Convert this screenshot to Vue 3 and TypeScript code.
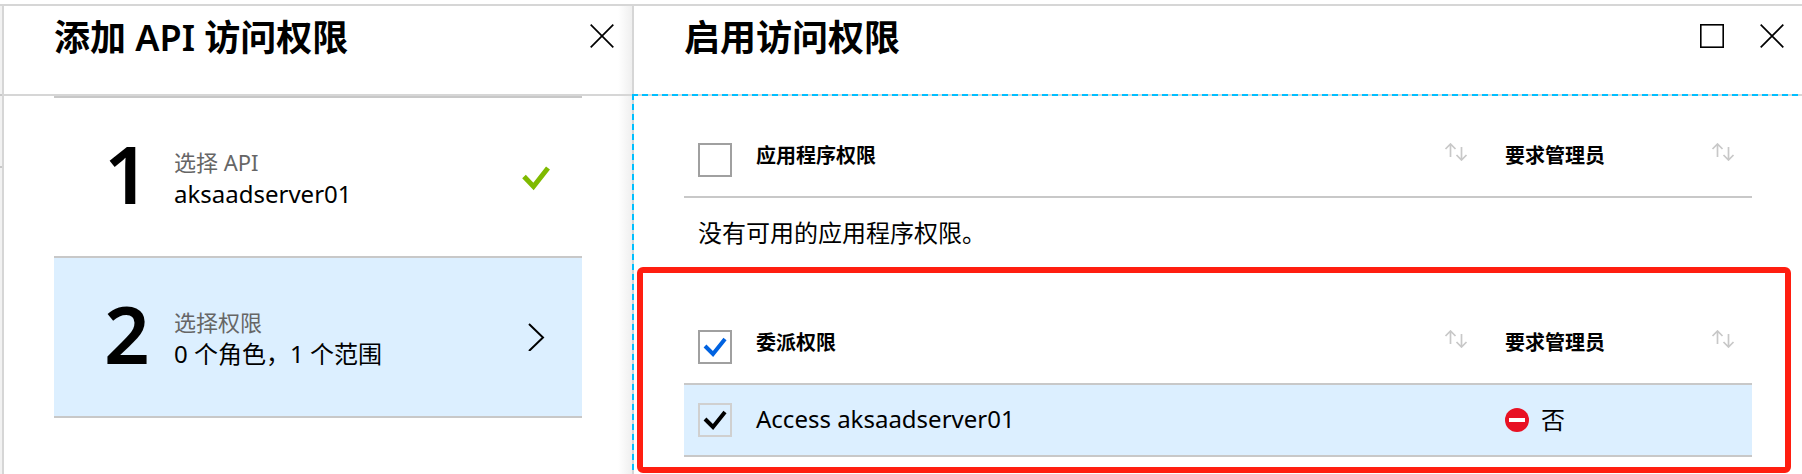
<script setup lang="ts">
import { ref } from 'vue'

interface Step {
  number: number
  title: string
  detail: string
  done: boolean
}

const steps: Step[] = [
  { number: 1, title: '选择 API', detail: 'aksaadserver01', done: true },
  { number: 2, title: '选择权限', detail: '0 个角色，1 个范围', done: false },
]

const allApplication = ref(false)
const allDelegated = ref(true)
const accessServer = ref(true)
</script>

<template>
  <div class="portal">
    <div class="gutter"></div>

    <section class="blade blade-steps" aria-labelledby="steps-title">
      <header class="blade-header">
        <h1 id="steps-title">添加 API 访问权限</h1>
        <div class="actions">
          <button type="button" class="icon-button" aria-label="关闭">
            <svg viewBox="0 0 24 24"><path d="M.7.7 23.3 23.3M23.3.7.7 23.3" /></svg>
          </button>
        </div>
      </header>
      <div class="steps">
        <button
          v-for="step in steps"
          :key="step.number"
          type="button"
          class="step"
          :class="{ active: !step.done }"
        >
          <span class="number">{{ step.number }}</span>
          <span class="labels">
            <span class="label">{{ step.title }}</span>
            <span class="detail">{{ step.detail }}</span>
          </span>
          <svg v-if="step.done" class="state" viewBox="0 0 28 28">
            <path class="done-mark" d="M2 13.5 11.500 23.500 26 5" />
          </svg>
          <svg v-else class="state" viewBox="0 0 28 28">
            <path class="chevron" d="M7 1 21 14.500 7 28" />
          </svg>
        </button>
      </div>
    </section>

    <section class="blade blade-permissions" aria-labelledby="permissions-title">
      <header class="blade-header">
        <h1 id="permissions-title">启用访问权限</h1>
        <div class="actions">
          <button type="button" class="icon-button" aria-label="最大化">
            <svg viewBox="0 0 24 24"><rect x=".75" y=".75" width="22.500" height="22.500" /></svg>
          </button>
          <button type="button" class="icon-button" aria-label="关闭">
            <svg viewBox="0 0 24 24"><path d="M.7.7 23.3 23.3M23.3.7.7 23.3" /></svg>
          </button>
        </div>
      </header>

      <div class="content">
        <div class="group">
          <table>
            <colgroup><col class="col-check" /><col /><col class="col-admin" /></colgroup>
            <thead>
              <tr>
                <th class="check"><input v-model="allApplication" type="checkbox" aria-label="应用程序权限" /></th>
                <th scope="col">
                  <div class="head">
                    应用程序权限
                    <svg class="sort" viewBox="0 0 24 18"><path d="M6.500 14V1M1.500 6l5-5 5 5M17.500 4v13M12.500 12l5 5 5-5" /></svg>
                  </div>
                </th>
                <th scope="col">
                  <div class="head">
                    要求管理员
                    <svg class="sort" viewBox="0 0 24 18"><path d="M6.500 14V1M1.500 6l5-5 5 5M17.500 4v13M12.500 12l5 5 5-5" /></svg>
                  </div>
                </th>
              </tr>
            </thead>
            <tbody>
              <tr><td colspan="3" class="empty">没有可用的应用程序权限。</td></tr>
            </tbody>
          </table>
        </div>

        <div class="group highlighted">
          <table>
            <colgroup><col class="col-check" /><col /><col class="col-admin" /></colgroup>
            <thead>
              <tr>
                <th class="check"><input v-model="allDelegated" type="checkbox" aria-label="委派权限" /></th>
                <th scope="col">
                  <div class="head">
                    委派权限
                    <svg class="sort" viewBox="0 0 24 18"><path d="M6.500 14V1M1.500 6l5-5 5 5M17.500 4v13M12.500 12l5 5 5-5" /></svg>
                  </div>
                </th>
                <th scope="col">
                  <div class="head">
                    要求管理员
                    <svg class="sort" viewBox="0 0 24 18"><path d="M6.500 14V1M1.500 6l5-5 5 5M17.500 4v13M12.500 12l5 5 5-5" /></svg>
                  </div>
                </th>
              </tr>
            </thead>
            <tbody>
              <tr class="selected">
                <td class="check"><input id="access" v-model="accessServer" type="checkbox" /></td>
                <td><label for="access">Access aksaadserver01</label></td>
                <td>
                  <div class="answer">
                    <svg viewBox="0 0 24 24"><circle cx="12" cy="12" r="12" /><rect x="4" y="10" width="16" height="4" /></svg>
                    否
                  </div>
                </td>
              </tr>
            </tbody>
          </table>
        </div>
      </div>
    </section>
  </div>
</template>

<style>
body {
  margin: 0;
  background: #fff;
}
</style>

<style scoped>
.portal {
  box-sizing: border-box;
  display: flex;
  min-height: 100vh;
  padding-top: 4px;
  overflow: hidden;
  color: #000;
  font: 24px/32px "Noto Sans", "Noto Sans CJK SC", sans-serif;
}

.gutter {
  flex: 0 0 2px;
  border-top: 2px solid #d6d6d6;
  background:
    linear-gradient(#c8c8c8, #c8c8c8) 0 88px / 100% 2px no-repeat,
    linear-gradient(#c8c8c8, #c8c8c8) 0 160px / 100% 2px no-repeat,
    #f2f2f2;
}

.blade {
  box-sizing: border-box;
  border-top: 2px solid #d6d6d6;
}

.blade-steps {
  flex: 0 0 630px;
  border-left: 2px solid #d6d6d6;
  background: linear-gradient(to left, #efefef, #fff 14px);
}

.blade-permissions {
  flex: 1;
  min-width: 0;
}

.blade-header {
  box-sizing: border-box;
  display: flex;
  justify-content: space-between;
  align-items: flex-start;
  height: 88px;
  padding: 10px 18px 0 50px;
}

.blade-steps .blade-header {
  height: 90px;
  border-bottom: 2px solid #d6d6d6;
}

.blade-permissions .blade-header {
  border-left: 2px solid #d6d6d6;
}

h1 {
  margin: 0;
  font-size: 36px;
  line-height: 44px;
  font-weight: 600;
}

.actions {
  display: flex;
  gap: 36px;
  padding-top: 8px;
}

button {
  padding: 0;
  border: 0;
  background: none;
  color: inherit;
  font: inherit;
  text-align: left;
}

.icon-button {
  width: 24px;
  height: 24px;
}

svg {
  display: block;
  fill: none;
  stroke: #000;
  stroke-width: 1.7;
}

.steps {
  margin: 0 50px;
  border-top: 2px solid #c8c8c8;
}

.step {
  box-sizing: border-box;
  display: flex;
  align-items: center;
  width: 100%;
  height: 160px;
  padding: 0 32px 0 50px;
  border-bottom: 2px solid #c8c8c8;
}

.step.active {
  background: #dcefff;
}

.number {
  width: 70px;
  padding-bottom: 8px;
  font-size: 80px;
  line-height: 88px;
  font-weight: 600;
}

.labels {
  display: flex;
  flex: 1;
  flex-direction: column;
  padding-top: 2px;
}

.label {
  color: #666;
  font-size: 22px;
}

.state {
  width: 28px;
  height: 28px;
}

.done-mark {
  stroke: #7fba00;
  stroke-width: 5;
}

.chevron {
  stroke: #000;
  stroke-width: 2;
}

.content {
  min-height: 380px;
  background:
    repeating-linear-gradient(to right, #00bfff 0 6px, #d6d6d6 6px 10px) 0 0 / 100% 2px no-repeat,
    repeating-linear-gradient(to bottom, #00bfff 0 6px, #d6d6d6 6px 10px) 0 0 / 2px 100% no-repeat;
}

.group {
  padding: 20px 50px 0 52px;
}

.highlighted {
  margin: 11px 11px 0 5px;
  padding: 28px 33px 10px 41px;
  border: 6px solid #ff1e10;
  border-radius: 6px;
}

table {
  width: 100%;
  border-collapse: separate;
  border-spacing: 0;
  table-layout: fixed;
}

.col-check {
  width: 72px;
}

.col-admin {
  width: 247px;
}

th,
td {
  padding: 0;
  text-align: left;
  vertical-align: middle;
}

th {
  height: 82px;
  border-bottom: 2px solid #c8c8c8;
  font-size: 20px;
  font-weight: 600;
}

.check {
  padding-left: 14px;
}

.head {
  display: flex;
  align-items: center;
  justify-content: space-between;
  padding: 2px 17px 0 0;
}

th:nth-child(2) .head {
  padding-right: 37px;
}

.sort {
  width: 24px;
  height: 18px;
  margin-bottom: 8px;
  stroke: #c8c8c8;
}

input {
  display: block;
  width: 34px;
  height: 34px;
  margin: 0;
  border: 2px solid #a0a0a0;
  appearance: none;
  background: #fff;
}

th input {
  margin-top: 10px;
}

th input:checked {
  background: url("data:image/svg+xml,%3Csvg xmlns='http://www.w3.org/2000/svg' viewBox='0 0 30 30'%3E%3Cpath d='M5 14l8 8L25 7' fill='none' stroke='%230062e0' stroke-width='4'/%3E%3C/svg%3E") #fff;
}

td input {
  border-color: #d0d0d0;
  background: transparent;
}

td input:checked {
  background: url("data:image/svg+xml,%3Csvg xmlns='http://www.w3.org/2000/svg' viewBox='0 0 30 30'%3E%3Cpath d='M5 14l8 8L25 7' fill='none' stroke='%23000' stroke-width='4'/%3E%3C/svg%3E");
}

.empty {
  height: 58px;
  padding: 14px 0 2px 14px;
  box-sizing: border-box;
}

.selected td {
  height: 70px;
  border-bottom: 2px solid #c8c8c8;
  background: #dcefff;
}

.selected label {
  display: block;
  padding-bottom: 2px;
}

.answer {
  display: flex;
  align-items: center;
  gap: 12px;
}

.answer svg {
  width: 24px;
  height: 24px;
  fill: #e81123;
  stroke: none;
}

.answer rect {
  fill: #fff;
}
</style>
